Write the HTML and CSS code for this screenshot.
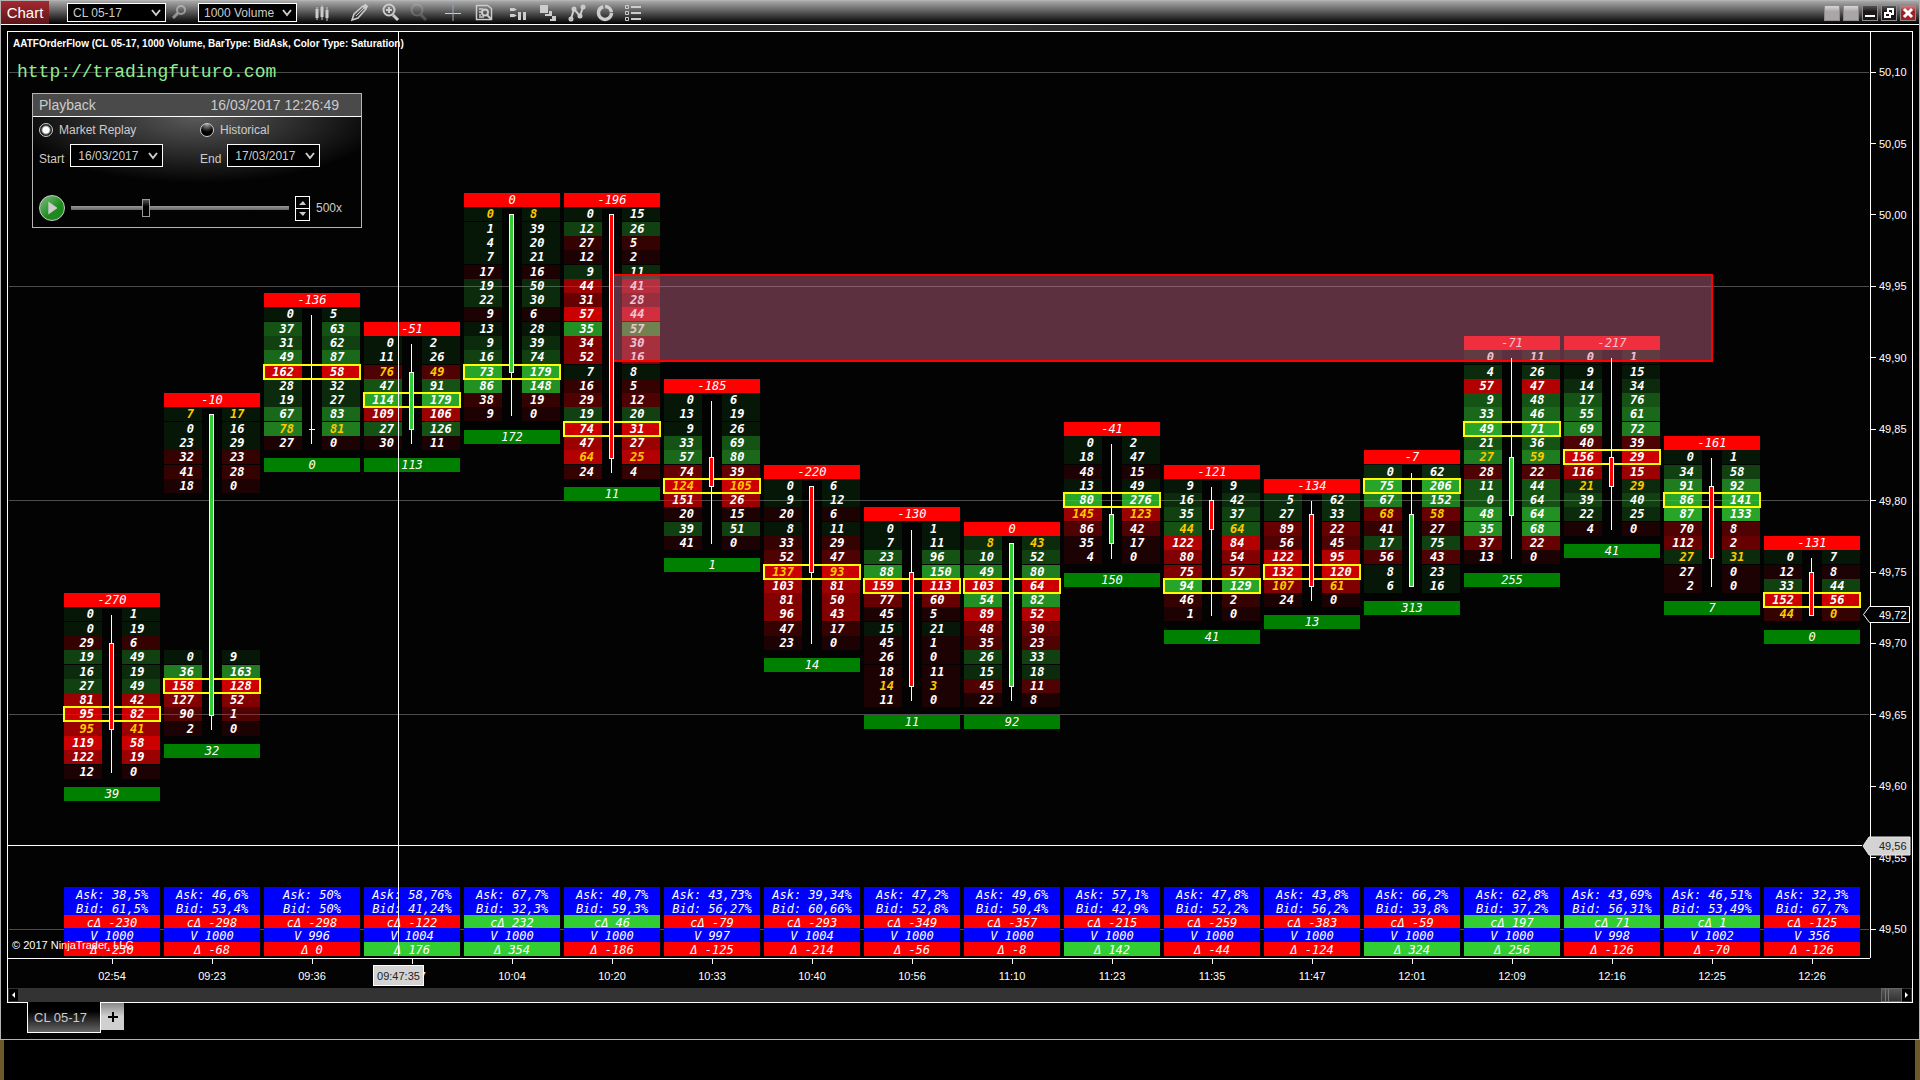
FILE: index.html
```html
<!DOCTYPE html>
<html lang="en">
<head>
    <meta charset="UTF-8">
    <meta name="viewport" content="width=device-width, initial-scale=1.0">
    <title>Chart - CL 05-17</title>
    <link rel="stylesheet" href="styles.css">
</head>
<body>
    <div class="window">
        <header class="titlebar">
            <h1>Chart</h1>
            <label class="select-box instrument">
                <select aria-label="Instrument"><option>CL 05-17</option></select>
                <svg class="chevron" viewBox="0 0 10 8"><path d="M1 1l4 5 4-5"/></svg>
            </label>
            <button class="tool search" aria-label="Search"><svg viewBox="0 0 20 20"><circle cx="12" cy="7" r="4"/><path d="M9 10l-5 5" stroke-width="3"/></svg></button>
            <label class="select-box interval">
                <select aria-label="Interval"><option>1000 Volume</option></select>
                <svg class="chevron" viewBox="0 0 10 8"><path d="M1 1l4 5 4-5"/></svg>
            </label>
            <nav class="tools">
                <button class="tool" aria-label="Chart style"><svg viewBox="0 0 20 20"><path d="M5 5v13M10 3v15M15 5v14" stroke-width="1"/><path d="M5 7v9M10 5v10M15 8v8" stroke-width="3"/></svg></button>
                <button class="tool gap-l" aria-label="Draw"><svg viewBox="0 0 20 20"><path d="M2 18l2-6 9-8 3 3-8 9z" stroke-width="1.500"/><path d="M6 14l8-8" stroke-width="1"/><path d="M14 3l3 3" stroke-width="4"/></svg></button>
                <button class="tool gap-s" aria-label="Zoom in"><svg viewBox="0 0 20 20"><circle cx="8" cy="8" r="5.500"/><path d="M5 8h6M8 5v6"/><path d="M12 13l5 5" stroke-width="3"/></svg></button>
                <button class="tool off" aria-label="Zoom out"><svg viewBox="0 0 20 20"><circle cx="8" cy="8" r="5.500"/><path d="M12 13l5 5" stroke-width="3"/></svg></button>
                <button class="tool gap-m" aria-label="Cross hair"><svg viewBox="0 0 20 20"><path d="M2 11.500h16" stroke-width="1"/><path d="M10 3v16" stroke="#93a9c0" stroke-width="1"/></svg></button>
                <button class="tool gap-s" aria-label="Data box"><svg viewBox="0 0 20 20"><path d="M2.500 3.500h11l4 3v11h-15zM5 7h4M5 10h3M5 13h2M5 15h5" stroke-width="1.500"/><circle cx="11" cy="10.500" r="3"/><path d="M13 13l4 4"/></svg></button>
                <button class="tool gap-m" aria-label="Chart trader"><svg viewBox="0 0 20 20"><path d="M2 6h4l3 1.500L6 9H2zM2 12h4l3 1.500L6 15H2zM10 10h3v8h-3zM15 10h3v8h-3z" fill="#ccc" stroke="none"/></svg></button>
                <button class="tool gap-s" aria-label="Data series"><svg viewBox="0 0 20 20"><path d="M1 3h8v8H1zM10 9v3H6v2h7V9zM13 14v3h-2v2h6v-5z" fill="#ccc" stroke="none"/></svg></button>
                <button class="tool" aria-label="Indicators"><svg viewBox="0 0 20 20"><path d="M4 17L7 7l6 7 3-9"/><circle cx="4" cy="17" r="1.500"/><circle cx="7" cy="7" r="1.500"/><circle cx="13" cy="14" r="1.500"/><circle cx="16" cy="5" r="1.500"/></svg></button>
                <button class="tool" aria-label="Strategies"><svg viewBox="0 0 20 20"><circle cx="10" cy="11" r="6.500" stroke-width="3.500" stroke-dasharray="28 2 9 2"/></svg></button>
                <button class="tool" aria-label="Properties"><svg viewBox="0 0 20 20"><path d="M2.500 3.500h3v3h-3zM2.500 9.500h3v3h-3zM2.500 15.500h3v3h-3z" stroke-width="1"/><path d="M8 5h10M8 11h10M8 17h10"/></svg></button>
            </nav>
            <div class="win-buttons">
                <button class="blank" aria-label="Link instrument"></button>
                <button class="blank" aria-label="Link interval"></button>
                <button aria-label="Minimize"><svg viewBox="0 0 14 14"><path d="M2 10h10"/></svg></button>
                <button aria-label="Restore"><svg viewBox="0 0 14 14"><path d="M3 7h5v4H3zM6 6V3h5v5H9"/></svg></button>
                <button class="close" aria-label="Close"><svg viewBox="0 0 14 14"><path d="M3 3l8 8M11 3l-8 8" stroke-width="3"/></svg></button>
            </div>
        </header>

        <main>
            <div class="chart">
                <div class="plot" id="plot">
                    <p class="plot-title">AATFOrderFlow (CL 05-17, 1000 Volume, BarType: BidAsk, Color Type: Saturation)</p>
                    <a class="site" href="http://tradingfuturo.com">http://tradingfuturo.com</a>
                    <p class="copyright">© 2017 NinjaTrader, LLC</p>
                    <div class="zone"></div>
                    <div class="cross-v"></div>
                    <div class="cross-h"></div>

                    <form class="playback">
                        <div class="pb-head"><span>Playback</span><span>16/03/2017 12:26:49</span></div>
                        <div class="pb-body">
                            <div class="pb-modes">
                                <label><input type="radio" name="mode" checked>Market Replay</label>
                                <label><input type="radio" name="mode">Historical</label>
                            </div>
                            <div class="pb-dates">
                                <div class="pb-date">
                                    <label for="start">Start</label>
                                    <span class="select-box">
                                        <select id="start"><option>16/03/2017</option></select>
                                        <svg class="chevron" viewBox="0 0 10 8"><path d="M1 1l4 5 4-5"/></svg>
                                    </span>
                                </div>
                                <div class="pb-date">
                                    <label for="end">End</label>
                                    <span class="select-box">
                                        <select id="end"><option>17/03/2017</option></select>
                                        <svg class="chevron" viewBox="0 0 10 8"><path d="M1 1l4 5 4-5"/></svg>
                                    </span>
                                </div>
                            </div>
                            <div class="pb-run">
                                <button type="button" class="play" aria-label="Play"><svg viewBox="0 0 26 26"><path d="M9 6l10 7-10 7z" fill="#ccc"/></svg></button>
                                <input type="range" aria-label="Position" min="0" max="100" value="34">
                                <span class="spinner">
                                    <button type="button" aria-label="Faster"><svg viewBox="0 0 13 11"><path d="M3 8l4-4 3 4z" fill="#ccc"/></svg></button>
                                    <button type="button" aria-label="Slower"><svg viewBox="0 0 13 11"><path d="M3 3l4 4 3-4z" fill="#ccc"/></svg></button>
                                </span>
                                <span>500x</span>
                            </div>
                        </div>
                    </form>
                </div>

                <div class="prices" id="prices">
                    <div class="marker last">
                        <svg viewBox="0 0 49 18"><path d="M7.500.500h40v16h-40l-6-8z"/></svg><span>49,72</span>
                    </div>
                    <div class="marker cursor">
                        <svg viewBox="0 0 49 20"><path d="M7 1h41v18H7L1 10z"/></svg><span>49,56</span>
                    </div>
                </div>

                <div class="times" id="times">
                    <div class="time-cursor">09:47:35</div>
                </div>

                <div class="scrollbar">
                    <button aria-label="Scroll left"><svg viewBox="0 0 9 12"><path d="M6 3v6L3 6z" fill="#fff"/></svg></button>
                    <div class="thumb"></div>
                    <button aria-label="Scroll right"><svg viewBox="0 0 9 12"><path d="M3 3v6l3-3z" fill="#fff"/></svg></button>
                </div>
            </div>

            <div class="tabs">
                <button class="tab">CL 05-17</button>
                <button class="add" aria-label="New tab"><svg viewBox="0 0 12 12"><path d="M6 1v10M1 6h10"/></svg></button>
            </div>
        </main>
    </div>
    <div class="desktop"></div>

    <script>
        const TOP_PRICE = 5010; // price of tick 0, in cents
        const plot = document.getElementById("plot");
        const prices = document.getElementById("prices");
        const times = document.getElementById("times");

        // first/open/close are ticks under 50,10. rows are "bid/ask", * leaves empty ticks
        const bars = [
            {time: "02:54", delta: -270, total: 39, first: 38, open: 40, close: 46, ask: "38,5", bid: "61,5", cum: -230, vol: 1000, d: -230,
             rows: "0/1 0/19 29/6 19/49 16/19 27/49 81/42 95/82 95/41 119/58 122/19 12/0"},
            {time: "09:23", delta: -10, total: 32, first: 24, open: 45, close: 24, ask: "46,6", bid: "53,4", cum: -298, vol: 1000, d: -68,
             rows: "7/17 0/16 23/29 32/23 41/28 18/0 * * * * * * * * * * * 0/9 36/163 158/128 127/52 90/1 2/0"},
            {time: "09:36", delta: -136, total: 0, first: 17, open: 25, close: 25, ask: "50", bid: "50", cum: -298, vol: 996, d: 0,
             rows: "0/5 37/63 31/62 49/87 162/58 28/32 19/27 67/83 78/81 27/0"},
            {time: "09:47", delta: -51, total: 113, first: 19, open: 25, close: 21, ask: "58,76", bid: "41,24", cum: -122, vol: 1004, d: 176,
             rows: "0/2 11/26 76/49 47/91 114/179 109/106 27/126 30/11"},
            {time: "10:04", delta: 0, total: 172, first: 10, open: 21, close: 10, ask: "67,7", bid: "32,3", cum: 232, vol: 1000, d: 354,
             rows: "0/8 1/39 4/20 7/21 17/16 19/50 22/30 9/6 13/28 9/39 16/74 73/179 86/148 38/19 9/0"},
            {time: "10:20", delta: -196, total: 11, first: 10, open: 10, close: 27, ask: "40,7", bid: "59,3", cum: 46, vol: 1000, d: -186,
             rows: "0/15 12/26 27/5 12/2 9/11 44/41 31/28 57/44 35/57 34/30 52/16 7/8 16/5 29/12 19/20 74/31 47/27 64/25 24/4"},
            {time: "10:33", delta: -185, total: 1, first: 23, open: 27, close: 29, ask: "43,73", bid: "56,27", cum: -79, vol: 997, d: -125,
             rows: "0/6 13/19 9/26 33/69 57/80 74/39 124/105 151/26 20/15 39/51 41/0"},
            {time: "10:40", delta: -220, total: 14, first: 29, open: 29, close: 35, ask: "39,34", bid: "60,66", cum: -293, vol: 1004, d: -214,
             rows: "0/6 9/12 20/6 8/11 33/29 52/47 137/93 103/81 81/50 96/43 47/17 23/0"},
            {time: "10:56", delta: -130, total: 11, first: 32, open: 35, close: 43, ask: "47,2", bid: "52,8", cum: -349, vol: 1000, d: -56,
             rows: "0/1 7/11 23/96 88/150 159/113 77/60 45/5 15/21 45/1 26/0 18/11 14/3 11/0"},
            {time: "11:10", delta: 0, total: 92, first: 33, open: 43, close: 33, ask: "49,6", bid: "50,4", cum: -357, vol: 1000, d: -8,
             rows: "8/43 10/52 49/80 103/64 54/82 89/52 48/30 35/23 26/33 15/18 45/11 22/8"},
            {time: "11:23", delta: -41, total: 150, first: 26, open: 33, close: 31, ask: "57,1", bid: "42,9", cum: -215, vol: 1000, d: 142,
             rows: "0/2 18/47 48/15 13/49 80/276 145/123 86/42 35/17 4/0"},
            {time: "11:35", delta: -121, total: 41, first: 29, open: 30, close: 32, ask: "47,8", bid: "52,2", cum: -259, vol: 1000, d: -44,
             rows: "9/9 16/42 35/37 44/64 122/84 80/54 75/57 94/129 46/2 1/0"},
            {time: "11:47", delta: -134, total: 13, first: 30, open: 31, close: 36, ask: "43,8", bid: "56,2", cum: -383, vol: 1000, d: -124,
             rows: "5/62 27/33 89/22 56/45 122/95 132/120 107/61 24/0"},
            {time: "12:01", delta: -7, total: 313, first: 28, open: 36, close: 31, ask: "66,2", bid: "33,8", cum: -59, vol: 1000, d: 324,
             rows: "0/62 75/206 67/152 68/58 41/27 17/75 56/43 8/23 6/16"},
            {time: "12:09", delta: -71, total: 255, first: 20, open: 31, close: 27, ask: "62,8", bid: "37,2", cum: 197, vol: 1000, d: 256,
             rows: "0/11 4/26 57/47 9/48 33/46 49/71 21/36 27/59 28/22 11/44 0/64 48/64 35/68 37/22 13/0"},
            {time: "12:16", delta: -217, total: 41, first: 20, open: 27, close: 29, ask: "43,69", bid: "56,31", cum: 71, vol: 998, d: -126,
             rows: "0/1 9/15 14/34 17/76 55/61 69/72 40/39 156/29 116/15 21/29 39/40 22/25 4/0"},
            {time: "12:25", delta: -161, total: 7, first: 27, open: 29, close: 34, ask: "46,51", bid: "53,49", cum: 1, vol: 1002, d: -70,
             rows: "0/1 34/58 91/92 86/141 87/133 70/8 112/2 27/31 27/0 2/0"},
            {time: "12:26", delta: -131, total: 0, first: 34, open: 35, close: 38, ask: "32,3", bid: "67,7", cum: -125, vol: 356, d: -126,
             rows: "0/7 12/8 33/44 152/56 44/0"}
        ];

        // tick number to grid line
        function line(tick){
            return tick + 3;
        }

        function add(parent, cls, from, to, text){
            const el = document.createElement("div");
            el.className = cls;
            el.style.gridRow = line(from) + " / " + line(to + 1);
            if(text !== undefined) el.textContent = text;
            parent.appendChild(el);
            return el;
        }

        for(let tick = 0; tick <= 60; tick += 15){
            add(plot, "gridline", tick, tick);
        }
        for(let tick = 0; tick <= 60; tick += 5){
            add(prices, "price", tick, tick, ((TOP_PRICE - tick) / 100).toFixed(2).replace(".", ","));
        }

        bars.forEach((b, i) => {
            const bar = document.createElement("div");
            bar.className = "bar";
            bar.style.gridColumn = i + 1;
            plot.appendChild(bar);

            const rows = b.rows.split(" ").map(r => r == "*" ? null : r.split("/").map(Number));
            const sums = rows.map(r => r ? r[0] + r[1] : 0);
            const max = Math.max(...sums);
            const last = b.first + rows.length - 1;

            add(bar, "bar-head", b.first - 1, b.first - 1, b.delta);
            rows.forEach((r, n) => {
                if(!r) return;
                const tick = b.first + n;
                const side = r[0] > r[1] ? "sell" : "buy";
                const level = Math.max(1, Math.round(sums[n] / max * 8));
                const now = tick == b.close ? " now" : "";
                add(bar, "cell bid " + side + " l" + level + now, tick, tick, r[0]);
                add(bar, "cell ask " + side + " l" + level + now, tick, tick, r[1]);
            });
            const poc = b.first + sums.indexOf(max);
            add(bar, "poc", poc, poc);
            add(bar, "wick", b.first, last);
            if(b.open == b.close){
                add(bar, "doji", b.open, b.open);
            }else{
                add(bar, "body " + (b.close < b.open ? "up" : "down"), Math.min(b.open, b.close), Math.max(b.open, b.close));
            }
            add(bar, "bar-foot", last + 1, last + 1, b.total);

            const stats = document.createElement("div");
            stats.className = "stats";
            stats.style.gridColumn = i + 1;
            stats.innerHTML = `
                <div>Ask: ${b.ask}%</div>
                <div>Bid: ${b.bid}%</div>
                <div class="cum ${b.cum > 0 ? "pos" : "neg"}">cΔ ${b.cum}</div>
                <div>V ${b.vol}</div>
                <div class="${b.d > 0 ? "pos" : "neg"}">Δ ${b.d}</div>`;
            plot.appendChild(stats);

            const time = document.createElement("div");
            time.className = "time";
            time.textContent = b.time;
            times.appendChild(time);
        });
    </script>
</body>
</html>
```
FILE: styles.css
```css
*{box-sizing: border-box;}
body{
    display: flex;
    flex-direction: column;
    height: 100vh;
    margin: 0;
    background: #000;
    color: #ccc;
    font: 12px "Liberation Sans", Arial, sans-serif;
}
h1, p{
    margin: 0;
    font-weight: normal;
}
button{
    padding: 0;
    border: 0;
    background: none;
    color: inherit;
    font: inherit;
}
svg{
    display: block;
    fill: none;
    stroke-width: 2;
}
.window{
    flex: 1;
    display: flex;
    flex-direction: column;
    min-height: 0;
    border: 1px solid #b4b4b4;
}
.desktop{
    height: 40px;
    border: solid #6c5a28;
    border-width: 0 5px 0 4px;
}

/* title bar */
.titlebar{
    display: flex;
    align-items: center;
    height: 24px;
    border-bottom: 1px solid #fff;
    background: linear-gradient(#a8a8a8, #000);
}
.titlebar h1{
    width: 48px;
    height: 23px;
    background: linear-gradient(#a52a30, #5c1418);
    color: #fff;
    font-size: 15px;
    line-height: 23px;
    text-align: center;
}
.select-box{
    position: relative;
    display: block;
}
.select-box select{
    display: block;
    width: 100%;
    height: 19px;
    padding: 0 5px;
    border: 1px solid #fff;
    border-radius: 0;
    background: #000;
    color: #ccc;
    font: inherit;
    appearance: none;
}
.chevron{
    position: absolute;
    top: 6px;
    right: 5px;
    width: 10px;
    height: 8px;
    stroke: #ccc;
    pointer-events: none;
}
.instrument{
    width: 99px;
    margin-left: 18px;
}
.interval{
    width: 99px;
}
.tool svg{
    width: 20px;
    height: 20px;
    stroke: #ccc;
}
.search{
    margin: 0 9px 0 3px;
    opacity: .6;
}
.tools{
    display: flex;
    gap: 8px;
    margin: 0 0 2px 15px;
}
.gap-s{margin-left: 3px;}
.gap-m{margin-left: 6px;}
.gap-l{margin-left: 10px;}
.off{opacity: .25;}
.win-buttons{
    display: flex;
    gap: 3px;
    margin: 1px 3px 0 auto;
}
.win-buttons button{
    width: 16px;
    height: 16px;
    border: 1px solid #8c8c8c;
    background: linear-gradient(#555, #1c1618 40%);
}
.win-buttons svg{
    stroke: #fff;
}
.win-buttons .blank{
    background: linear-gradient(#d8d8d8, #aaa6a6 40%);
}
.win-buttons .close{
    background: linear-gradient(#d08080, #a02028 40%);
}

/* chart frame */
main{
    flex: 1;
    display: flex;
    flex-direction: column;
    min-height: 0;
    padding: 6px 6px 0;
    background: linear-gradient(90deg, #000, #333 50%, #000) top / 100% 6px no-repeat;
}
.chart{
    flex: 1;
    display: grid;
    grid-template: minmax(0, 1fr) 30px 14px / 1fr 42px;
    min-height: 0;
    border: 1px solid #fff;
    background: #030303;
    color: #fff;
    font-size: 11px;
}
.plot{
    position: relative;
    display: grid;
    grid-template: repeat(63, minmax(0, 1fr)) / repeat(18, 1fr);
    column-gap: 4px;
    min-height: 0;
    padding: 4px 10px 22px 56px;
}
.plot-title{
    position: absolute;
    top: 5px;
    left: 5px;
    font-size: 10px;
    font-weight: bold;
    line-height: 13px;
}
.site{
    position: absolute;
    top: 30px;
    left: 9px;
    color: #90ee90;
    font: 18px/20px "Liberation Mono", "Courier New", monospace;
    text-decoration: none;
}
.copyright{
    position: absolute;
    bottom: 6px;
    left: 4px;
    z-index: 3;
    line-height: 14px;
}
.gridline{
    grid-column: 1 / -1;
    align-self: start;
    height: 1px;
    margin: 7px -9px 0 -55px;
    background: #4c4c4c;
}
.cross-v, .cross-h{
    position: absolute;
    z-index: 4;
    background: #fff;
}
.cross-v{
    top: 0;
    bottom: 2px;
    left: 390px;
    width: 1px;
}
.cross-h{
    top: 813px;
    right: 8px;
    left: 0;
    height: 1px;
}
.zone{
    z-index: 2;
    grid-area: 17 / 6 / 24 / 18;
    margin: 9px 47px 3px;
    border: 2px solid #f00;
    background: rgba(219, 112, 147, .42);
}

/* one footprint bar */
.bar{
    display: grid;
    grid-row: 1 / -1;
    grid-template-rows: subgrid;
    grid-template-columns: 1fr 20px 1fr;
    font: italic 12px/14px "DejaVu Sans Mono", monospace;
}
.bar-head, .bar-foot, .poc{
    grid-column: 1 / -1;
    align-self: start;
    height: 14px;
    text-align: center;
}
.bar-head{background: #f00;}
.bar-foot{
    margin-top: 8px;
    background: #008000;
}
.cell{
    align-self: start;
    height: 14px;
    padding: 0 8px;
    font-weight: bold;
}
.bid{
    grid-column: 1;
    text-align: right;
}
.ask{grid-column: 3;}
.buy{background: rgb(50 205 50 / var(--level));}
.sell{background: rgb(255 0 0 / var(--level));}
.l1{--level: .1;}
.l2{--level: .2;}
.l3{--level: .3;}
.l4{--level: .4;}
.l5{--level: .5;}
.l6{--level: .6;}
.l7{--level: .7;}
.l8{--level: .8;}
.now{color: #ffc800;}
.poc{
    z-index: 1;
    height: 16px;
    margin: -1px -1px 0;
    border: 2px solid #ff0;
}
.wick, .body, .doji{
    z-index: 3;
    grid-column: 2;
}
.wick{
    width: 1px;
    margin: 8px 0 6px 9px;
    background: #fff;
}
.body{
    width: 5px;
    margin: 7px 0 6px 7px;
    border: 1px solid #fff;
}
.doji{
    width: 6px;
    height: 1px;
    margin: 7px 0 0 7px;
    background: #fff;
}
.up{background: #32cd32;}
.down{background: #f00;}

/* volume figures under the bars */
.stats{
    z-index: 2;
    grid-row: 1 / -1;
    align-self: end;
    margin-bottom: -20px;
    background: #00f;
    font: italic 12px/16px "DejaVu Sans Mono", monospace;
    text-align: center;
    white-space: nowrap;
}
.stats div{height: 14px;}
.stats .cum{height: 13px;}
.pos{background: #32cd32;}
.neg{background: #f00;}

/* axes */
.prices{
    position: relative;
    display: grid;
    grid-template-rows: repeat(63, minmax(0, 1fr));
    min-height: 0;
    padding: 4px 0 22px;
    border-left: 1px solid #fff;
}
.price{
    display: flex;
    align-items: center;
    align-self: start;
    gap: 3px;
    height: 15px;
}
.price::before{
    content: "";
    width: 5px;
    height: 1px;
    background: #fff;
}
.marker{
    position: absolute;
    left: -9px;
    z-index: 5;
    width: 49px;
}
.marker span{
    position: absolute;
    top: 0;
    left: 17px;
}
.last{
    top: 574px;
    line-height: 18px;
}
.last path{
    fill: #030303;
    stroke: #fff;
    stroke-width: 1;
}
.cursor{
    top: 804px;
    color: #222;
    line-height: 20px;
}
.cursor path{
    fill: #d3d3d3;
    stroke: #e8e8e8;
    stroke-width: 1;
}
.times{
    position: relative;
    grid-column: 1;
    display: grid;
    grid-template-columns: repeat(18, 1fr);
    column-gap: 4px;
    padding: 0 10px 0 56px;
    border-top: 1px solid #fff;
    text-align: center;
}
.time::before{
    content: "";
    display: block;
    width: 1px;
    height: 5px;
    margin: 0 auto 6px;
    background: #fff;
}
.time-cursor{
    position: absolute;
    top: 6px;
    left: 365px;
    width: 51px;
    height: 21px;
    border: 1px solid #fff;
    background: #d3d3d3;
    color: #222;
    line-height: 20px;
}
.scrollbar{
    grid-column: 1 / -1;
    display: flex;
    padding: 0 1px;
    background: #333;
}
.scrollbar button{
    width: 9px;
    margin: 1px 0;
    background: #000;
}
.thumb{
    width: 21px;
    margin-left: auto;
    border: 1px solid #666;
    background: linear-gradient(90deg, transparent 3px, #777 3px 4px, transparent 4px 6px, #777 6px 7px, transparent 7px), linear-gradient(#555, #333);
}

/* tabs */
.tabs{
    display: flex;
    height: 36px;
    padding-left: 20px;
}
.tab{
    width: 74px;
    height: 31px;
    margin-top: -1px;
    padding: 0 12px 0 6px;
    border: 1px solid #fff;
    border-top: 0;
    background: linear-gradient(#000 30%, #666);
    font-size: 13px;
    text-align: left;
    white-space: nowrap;
}
.add{
    display: flex;
    align-items: center;
    justify-content: center;
    width: 23px;
    height: 27px;
    background: linear-gradient(#888, #d0d0d0 50%);
}
.add svg{
    width: 12px;
    stroke: #000;
}

/* playback panel */
.playback{
    position: absolute;
    top: 61px;
    left: 24px;
    width: 330px;
    border: 1px solid #b4b4b4;
    background: #030303;
    color: #ccc;
    font-size: 12px;
}
.pb-head{
    display: flex;
    justify-content: space-between;
    padding: 0 22px 0 6px;
    border-bottom: 1px solid #fff;
    background: #4a4a4a;
    font-size: 14px;
    line-height: 22px;
}
.pb-body{
    height: 110px;
    padding: 6px;
    background: radial-gradient(ellipse 190px 66px at 50% 0, #5a5a5a, #030303);
}
.pb-modes, .pb-dates{
    display: grid;
    grid-template-columns: 161px 1fr;
}
.pb-modes label{
    display: flex;
    align-items: center;
    gap: 6px;
    height: 14px;
}
.pb-modes input{
    width: 14px;
    height: 14px;
    margin: 0;
    border: 1px solid #ccc;
    border-radius: 50%;
    background: radial-gradient(circle at 50% 0, #aaa, #000 60%);
    appearance: none;
}
.pb-modes input:checked{
    background: radial-gradient(circle, #fff 3px, #222 5px);
}
.pb-dates{
    margin-top: 7px;
}
.pb-date{
    display: flex;
    gap: 6px;
    height: 28px;
    line-height: 30px;
}
.pb-date .select-box{
    width: 93px;
    line-height: 14px;
}
.pb-date select{
    height: 23px;
    padding: 0 7px;
}
.pb-date .chevron{top: 8px;}
.pb-run{
    display: flex;
    align-items: center;
    gap: 6px;
    margin-top: 23px;
}
.play{
    width: 26px;
    height: 26px;
    border: 1px solid #ccc;
    border-radius: 50%;
    background: linear-gradient(135deg, #7cc07c, #1e8a1e 60%);
}
.pb-run input{
    width: 218px;
    height: 18px;
    margin: 0;
    background: linear-gradient(#999, #666) center / 100% 4px no-repeat;
    appearance: none;
}
.pb-run input::-webkit-slider-thumb{
    width: 8px;
    height: 18px;
    border: 1px solid #999;
    background: linear-gradient(#555, #000 40%);
    appearance: none;
}
.spinner{
    width: 15px;
    border: 1px solid #fff;
    background: #000;
}
.spinner button{
    display: block;
    width: 13px;
    height: 11px;
}
.spinner button + button{
    height: 12px;
    border-top: 1px solid #fff;
}
```
